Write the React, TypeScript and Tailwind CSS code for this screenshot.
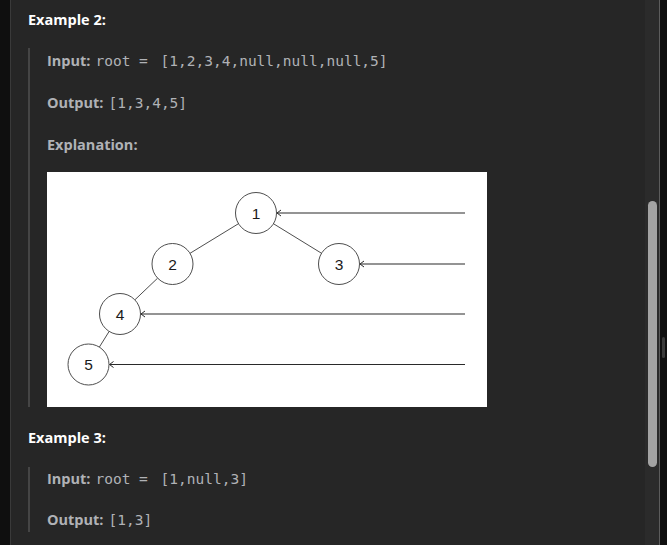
import React from "react";

type N = { x: number; y: number; label: string };

const nodes: Record<string, N> = {
  n1: { x: 209, y: 41, label: "1" },
  n2: { x: 125.5, y: 92, label: "2" },
  n3: { x: 292, y: 92, label: "3" },
  n4: { x: 73, y: 142, label: "4" },
  n5: { x: 41.5, y: 192.5, label: "5" },
};
const R = 20.5;

function edge(a: N, b: N) {
  const dx = b.x - a.x;
  const dy = b.y - a.y;
  const d = Math.sqrt(dx * dx + dy * dy);
  const ux = dx / d;
  const uy = dy / d;
  return {
    x1: a.x + ux * R,
    y1: a.y + uy * R,
    x2: b.x - ux * R,
    y2: b.y - uy * R,
  };
}

function Diagram() {
  const edges = [
    edge(nodes.n1, nodes.n2),
    edge(nodes.n1, nodes.n3),
    edge(nodes.n2, nodes.n4),
    edge(nodes.n4, nodes.n5),
  ];
  const arrows = [nodes.n1, nodes.n3, nodes.n4, nodes.n5];
  return (
    <svg width="440" height="235" viewBox="0 0 440 235" className="block">
      <rect x="0" y="0" width="440" height="235" fill="#ffffff" />
      {edges.map((e, i) => (
        <line key={i} {...e} stroke="#3a3a3a" strokeWidth="0.9" />
      ))}
      {arrows.map((n, i) => {
        const tip = n.x + R + 0.5;
        return (
          <g key={i} stroke="#2a2a2a" fill="none">
            <line x1={418} y1={n.y} x2={tip} y2={n.y} strokeWidth="1.2" />
            <polyline
              points={`${tip + 4},${n.y - 3} ${tip},${n.y} ${tip + 4},${n.y + 3}`}
              strokeWidth="1"
            />
          </g>
        );
      })}
      {Object.values(nodes).map((n) => (
        <g key={n.label}>
          <circle cx={n.x} cy={n.y} r={R} fill="#ffffff" stroke="#3a3a3a" strokeWidth="0.9" />
          <text
            x={n.x}
            y={n.y + 5.5}
            textAnchor="middle"
            fontFamily="'Liberation Sans', Arial, sans-serif"
            fontSize="15.5"
            fill="#1a1a1a"
          >
            {n.label}
          </text>
        </g>
      ))}
    </svg>
  );
}

const sans = { fontFamily: "'Open Sans', 'Noto Sans', sans-serif" };
const mono = { fontFamily: "'DejaVu Sans Mono', monospace" };

function Row({ label, name, value }: { label: string; name?: string; value: string }) {
  return (
    <div className="h-[22px] flex items-baseline text-[#b0b2b6] whitespace-pre leading-[22px]">
      <span className="font-bold text-[14.5px]" style={sans}>
        {label}
      </span>
      <span className="w-[5px]" />
      {name && (
        <span className="text-[14.5px] mr-[4px]" style={mono}>
          {name}
        </span>
      )}
      <span className="text-[14.5px]" style={mono}>
        {value}
      </span>
    </div>
  );
}

export default function App() {
  return (
    <div className="w-[667px] h-[545px] flex bg-[#0f0f0f] overflow-hidden">
      <div className="w-[10px] shrink-0" />
      <div className="flex-1 flex border-l border-[#3a3a3a] bg-[#262626]">
        <div className="flex-1 pl-[17px] pt-[9px]">
          <h3 className="text-white font-bold text-[14.5px] leading-[22px] h-[22px]" style={sans}>
            Example 2:
          </h3>
          <div className="mt-[17px] border-l-2 border-[#454545] pl-[17px] pt-[2px] flex flex-col gap-[20px]">
            <Row label="Input:" name="root = " value="[1,2,3,4,null,null,null,5]" />
            <Row label="Output:" value="[1,3,4,5]" />
            <p className="leading-[22px] h-[22px] text-[14.5px] text-[#b0b2b6] font-bold" style={sans}>
              Explanation:
            </p>
            <div className="-mt-[4px]">
              <Diagram />
            </div>
          </div>
          <h3 className="mt-[20px] text-white font-bold text-[14.5px] leading-[22px] h-[22px]" style={sans}>
            Example 3:
          </h3>
          <div className="mt-[18px] border-l-2 border-[#454545] pl-[17px] pt-[1px] pb-[1px] flex flex-col gap-[19px]">
            <Row label="Input:" name="root = " value="[1,null,3]" />
            <Row label="Output:" value="[1,3]" />
          </div>
        </div>
        <div className="w-[14px] shrink-0 bg-[#2b2b2b] pt-[201px] pl-[3px]">
          <div className="w-[9px] h-[266px] rounded-full bg-[#a3a3a3]" />
        </div>
      </div>
      <div className="w-[8px] shrink-0 border-l border-[#5c5c5c] relative">
        <div className="absolute left-[2px] top-[337px] w-[3px] h-[21px] rounded-sm bg-[#3a3a3a]" />
      </div>
    </div>
  );
}
